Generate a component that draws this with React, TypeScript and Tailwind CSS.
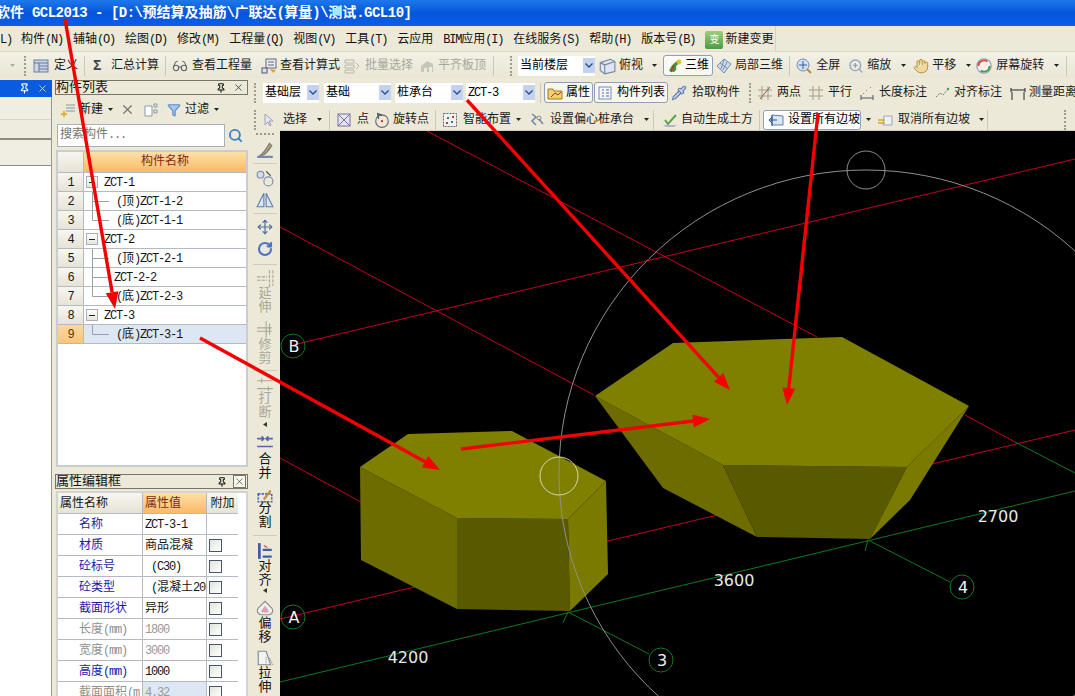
import type { ReactNode } from "react"
import { Pin, X, Search, Filter, Move, RotateCw, Pipette, Glasses, ZoomIn, Hand } from "lucide-react"

const T = ({ children, latin = "text-[12px] tracking-[-1.2px]" }: { children: string; latin?: string }) => (
  <>
    {children.split(/([\u4e00-\u9fff]+)/).map((part, i) =>
      /[\u4e00-\u9fff]/.test(part) ? <span key={i}>{part}</span> : <span key={i} className={latin}>{part}</span>
    )}
  </>
)

const Svg = ({ children, w = 16, h = 16 }: { children: ReactNode; w?: number; h?: number }) => (
  <svg width={w} height={h} viewBox="0 0 16 16" className="shrink-0" fill="none">{children}</svg>
)

const Caret = ({ className = "ml-[6px]" }: { className?: string }) => (
  <svg width="5" height="3" viewBox="0 0 5 3" className={`shrink-0 ${className}`}><path d="M0 0h5L2.5 3z" fill="#222" /></svg>
)
const Grip = ({ className = "" }: { className?: string }) => (
  <div className={`h-[20px] w-0 shrink-0 border-l-2 border-dotted border-[#9f9c8c] ${className}`} />
)
const Sep = ({ className = "" }: { className?: string }) => (
  <div className={`h-[20px] w-px shrink-0 bg-[#cbc8b6] ${className}`} />
)

const Tool = ({ icon, label, gap = "gap-[4px]", className = "", caret, caretClass, off }: {
  icon?: ReactNode; label: string; gap?: string; className?: string; caret?: boolean; caretClass?: string; off?: boolean
}) => (
  <div className={`flex shrink-0 items-center ${gap} ${off ? "text-[#a9a798]" : "text-[#1b1b1b]"} ${className}`}>
    {icon}
    <span className="whitespace-pre"><T>{label}</T></span>
    {caret && <Caret className={caretClass} />}
  </div>
)

const Drop = ({ label, className }: { label: string; className: string }) => (
  <div className={`flex h-[20px] shrink-0 items-center justify-between bg-white pl-[2px] ${className}`}>
    <span className="whitespace-pre"><T>{label}</T></span>
    <div className="flex h-[15px] w-[12px] items-center justify-center bg-[#c3d3ef]">
      <svg width="8" height="5" viewBox="0 0 8 5"><path d="M1 0l3 3 3-3 1 1-4 4-4-4z" fill="#2c4f8c" /></svg>
    </div>
  </div>
)

const icons = {
  define: <Svg><rect x="1" y="2" width="14" height="12" fill="#c9d6ea" stroke="#6f7f9c" /><path d="M1 5h14M6 5v9M6 8h9M6 11h9" stroke="#66779a" /></Svg>,
  glasses: <Glasses size={16} color="#666" strokeWidth={1.6} className="shrink-0" />,
  calc: <Svg><rect x="5" y="1" width="10" height="9" fill="#e8edf5" stroke="#667" /><path d="M7 4h6M7 7h6" stroke="#667" /><rect x="1" y="10" width="5" height="5" fill="#d8e2f2" stroke="#557" /><path d="M9 11l3 4 3-3" fill="#e0a030" /></Svg>,
  batch: <Svg><path d="M1 2h9v3H1zM1 7h9v3H1zM1 12h9v3H1z" stroke="#b9b7a9" /><path d="M12 5l3 3-3 3" stroke="#b9b7a9" /></Svg>,
  level: <Svg><path d="M2 14V8l6-5 6 3v8z" fill="#c7c6ba" /><path d="M5 14v-4h3v4zM10 14V9h3v5z" fill="#eceadd" /></Svg>,
  cube: <Svg w={18} h={18}><path d="M2 5l9-3 4 2v9l-9 2-4-3z" fill="#dfe6f2" stroke="#7486a3" /><path d="M2 5l4 2v8M6 7l9-3" stroke="#7486a3" /></Svg>,
  tri: <Svg><path d="M2 13c2-5 5-9 11-11-1 3-2 5-4 6 1 2 0 5-2 6z" fill="#3b9b3b" /><path d="M4 14l3-7" stroke="#b33" strokeWidth="1.5" /><circle cx="12" cy="4" r="2.4" fill="#e4c227" /></Svg>,
  part: <Svg><path d="M8 1l7 5-7 9-7-7z" fill="#cfdcee" stroke="#7b8ba8" /><path d="M4 5l8 6M8 2L5 11M11 4l-4 8" stroke="#7b8ba8" /></Svg>,
  full: <Svg><circle cx="7" cy="7" r="6" fill="#cfe0f5" stroke="#6d8cb8" /><path d="M7 3v8M3 7h8" stroke="#3b5d92" /><path d="M11 11l4 4" stroke="#b98c3a" strokeWidth="2" /></Svg>,
  zoom: <ZoomIn size={16} color="#8fa3c0" strokeWidth={2} className="shrink-0" />,
  pan: <Hand size={16} color="#b48c2f" fill="#efd9a0" strokeWidth={1.4} className="shrink-0" />,
  spin: <Svg w={18} h={18}><circle cx="8" cy="8" r="6.4" fill="#f5efe8" stroke="#8a9ab5" /><path d="M3 8a5 5 0 0 1 8-4" stroke="#d43" strokeWidth="1.6" /><path d="M13 8a5 5 0 0 1-8 4" stroke="#3a9a4b" strokeWidth="1.6" /></Svg>,
  prop: <Svg><path d="M1 4h5l1 2h8v8H1z" fill="#f1cf6a" stroke="#9c7c25" /><path d="M4 12l4-4 3 2 3-3" stroke="#a33" /></Svg>,
  list: <Svg><rect x="2" y="2" width="12" height="12" fill="#f3f6fb" stroke="#7e8ea9" /><path d="M5 5h2M5 8h2M5 11h2M9 5h3M9 8h3M9 11h3" stroke="#4d6894" /></Svg>,
  pick: <Pipette size={16} color="#5a78a8" fill="#c7d7ee" strokeWidth={1.6} className="shrink-0" />,
  two: <Svg><path d="M1 5h14M1 11h14M5 1v14M11 1v14" stroke="#a09d90" /><path d="M3 14L13 2" stroke="#8a5a3a" /></Svg>,
  para: <Svg><path d="M1 5h14M1 11h14M5 1v14M11 1v14" stroke="#a09d90" /></Svg>,
  len: <Svg><path d="M2 10v5M14 10v5M2 13h12" stroke="#556" /><path d="M4 9l1-1M7 6l1-1M11 3l1-1" stroke="#889" /></Svg>,
  align: <Svg><path d="M2 12l4-4 3 2 5-6" stroke="#778" strokeDasharray="2 1" /><circle cx="14" cy="4" r="1.2" fill="#495" /></Svg>,
  measure: <Svg><path d="M1 3v4M15 3v4M1 5h14M2 7v8M14 7v8" stroke="#222" /></Svg>,
  arrow: <Svg><path d="M5 2v11l3-3 2 4 1-1-2-4h4z" fill="#e6e8ef" stroke="#9aa3b5" /></Svg>,
  point: <Svg><rect x="2" y="2" width="12" height="12" fill="#e3e6f2" stroke="#7a6f9a" /><path d="M2 2l12 12M14 2L2 14" stroke="#7a6f9a" /></Svg>,
  rotP: <Svg w={18} h={18}><circle cx="8" cy="9" r="5.6" stroke="#667" /><path d="M4 2l1 5M4 2l4 2" stroke="#445" /><circle cx="8" cy="9" r="1" fill="#b33" /></Svg>,
  smart: <Svg><rect x="1.5" y="1.5" width="13" height="13" fill="#f2f2ee" stroke="#667" strokeDasharray="2 1" /><path d="M5 5h2v2H5zM9 9h2v2H9z" fill="#3f6fb0" /><path d="M10 4h2v2h-2zM4 10h2v2H4z" fill="#c33" /></Svg>,
  eccentric: <Svg><path d="M3 2l4 3-4 4 4 4M10 7l4 5" stroke="#6f86a8" strokeWidth="1.5" /><circle cx="10" cy="6" r="2" stroke="#888" /></Svg>,
  soil: <Svg w={18} h={16}><path d="M3 8l3 4 8-9" stroke="#5aa34a" strokeWidth="2" /><path d="M1 13h14l-3 2H4z" fill="#bcaed0" /></Svg>,
  slope: <Svg w={18} h={16}><path d="M4 3l11 1v9H4z" fill="#dce6f3" stroke="#5c7fb2" /><path d="M1 8h8M1 8l3-3M1 8l3 3M4 3v11" stroke="#25508f" /></Svg>,
  cancel: <Svg><path d="M7 4h8v9H6z" fill="#eef1f6" stroke="#9aa7bd" /><path d="M1 8h7M1 11h7" stroke="#d6a733" strokeWidth="1.4" /></Svg>,
  plus: <Svg><path d="M6 3h9M6 6h9M6 9h9" stroke="#8794ab" /><path d="M4 9v6M1 12h6" stroke="#e0b53a" strokeWidth="2" /></Svg>,
  copy: <Svg><path d="M2 4h7v10H2z" fill="#fff" stroke="#8c98ac" /><path d="M11 2h3v3h-3zM11 8h3v3h-3z" stroke="#8c98ac" /></Svg>,
}

const TitleBar = () => (
  <div className="flex h-[26px] shrink-0 items-center bg-gradient-to-b from-[#1f78ea] via-[#0555dc] to-[#0a5ee6] text-[14px] font-bold text-white">
    <span className="-ml-[4px] whitespace-pre"><T latin="text-[14px] tracking-[-0.5px]">软件 GCL2013 - [D:\预结算及抽筋\广联达(算量)\测试.GCL10]</T></span>
  </div>
)

const menus = ["构件(N)", "辅轴(O)", "绘图(D)", "修改(M)", "工程量(Q)", "视图(V)", "工具(T)", "云应用", "BIM应用(I)", "在线服务(S)", "帮助(H)", "版本号(B)"]

const MenuBar = () => (
  <div className="flex h-[26px] shrink-0 items-center border-b border-[#dcd9c8] bg-[#ece9d8] text-[12px] text-[#111]">
    <div className="flex h-full w-[776px] shrink-0 items-center gap-[10px] border-r border-[#d5d2c0] pl-[21px] pt-[3px]">
      <span className="absolute left-0 whitespace-pre"><T>L)</T></span>
      {menus.map((m) => <span key={m} className="shrink-0 whitespace-pre"><T>{m}</T></span>)}
      <div className="flex shrink-0 items-center gap-[2px] whitespace-pre">
        <div className="flex h-[18px] w-[18px] items-center justify-center rounded-[2px] bg-gradient-to-b from-[#9ccf7a] to-[#4f9a45] text-[10px] text-white">变</div>
        <span>新建变更</span>
      </div>
    </div>
  </div>
)

const TopToolbar = () => (
  <div className="flex h-[26px] shrink-0 items-center bg-gradient-to-b from-[#f3f1e6] to-[#e9e6d6] pt-[1px] text-[12px]">
    <div className="flex w-[20px] shrink-0 justify-end"><Caret className="mr-[5px] opacity-30" /></div>
    <Grip className="ml-[4px]" />
    <Tool className="ml-[7px]" gap="gap-[5px]" icon={icons.define} label="定义" />
    <Sep className="ml-[6px]" />
    <Tool className="ml-[8px]" gap="gap-[7px]" icon={<span className="w-[11px] text-[14px] font-bold leading-none text-[#444]">Σ</span>} label="汇总计算" />
    <Sep className="ml-[6px]" />
    <Tool className="ml-[6px]" icon={icons.glasses} label="查看工程量" />
    <Tool className="ml-[9px]" gap="gap-[3px]" icon={icons.calc} label="查看计算式" />
    <Tool className="ml-[4px]" gap="gap-[5px]" off icon={icons.batch} label="批量选择" />
    <Tool className="ml-[6px]" gap="gap-[3px]" off icon={icons.level} label="平齐板顶" />
    <Sep className="ml-[7px]" />
    <Grip className="ml-[16px]" />
    <Drop className="ml-[6px] w-[77px]" label="当前楼层" />
    <Tool className="ml-[3px]" gap="gap-[3px]" icon={icons.cube} label="俯视" caret caretClass="ml-[6px]" />
    <div className="ml-[6px] flex h-[21px] w-[50px] shrink-0 items-center gap-[2px] rounded-[3px] border border-[#8f9fb5] bg-white/70 pl-[3px]">
      {icons.tri}<span>三维</span>
    </div>
    <Tool className="ml-[3px]" gap="gap-[3px]" icon={icons.part} label="局部三维" />
    <Sep className="ml-[6px]" />
    <Tool className="ml-[6px]" gap="gap-[4px]" icon={icons.full} label="全屏" />
    <Tool className="ml-[8px]" gap="gap-[3px]" icon={icons.zoom} label="缩放" caret caretClass="ml-[7px]" />
    <Tool className="ml-[7px]" gap="gap-[3px]" icon={icons.pan} label="平移" caret caretClass="ml-[7px]" />
    <Tool className="ml-[4px]" gap="gap-[3px]" icon={icons.spin} label="屏幕旋转" caret caretClass="ml-[7px]" />
    <Sep className="ml-[7px]" />
    <div className="ml-[7px] shrink-0">{icons.zoom}</div>
  </div>
)

const LeftDock = () => (
  <div className="flex w-[52px] shrink-0 flex-col pt-[2px]">
    <div className="flex h-[17px] shrink-0 items-center justify-end gap-[7px] bg-[#0a5be0] pr-[4px] text-white">
      <Pin size={11} strokeWidth={2.5} />
      <X size={11} strokeWidth={1.5} />
    </div>
    <div className="flex flex-1 flex-col border-r border-[#9a988a]">
      <div className="h-[23px] border-b border-[#d8d5c4] bg-[#f0eee2]" />
      <div className="h-[20px] border-b-2 border-[#8d8b7e] bg-[#eeebdf]" />
      <div className="h-[26px] border-b border-[#8d8b7e] bg-[#f0eee2]" />
      <div className="flex-1 bg-white" />
    </div>
  </div>
)

const tree: [string, number, string?][] = [
  ["ZCT-1", 0],
  ["(顶)ZCT-1-2", 1, "mid"],
  ["(底)ZCT-1-1", 1, "last"],
  ["ZCT-2", 0],
  ["(顶)ZCT-2-1", 1, "mid"],
  ["ZCT-2-2", 1, "midshort"],
  ["(底)ZCT-2-3", 1, "last"],
  ["ZCT-3", 0],
  ["(底)ZCT-3-1", 1, "last"],
]

const TreeRow = ({ name, level, kind, n }: { name: string; level: number; kind?: string; n: number }) => {
  const active = n === 9
  return (
    <div className="flex h-[19px] border-b border-[#b4bac2]">
      <div className={`flex w-[26px] shrink-0 items-center justify-center border-r border-[#b4bac2] pt-[1px] text-[12px] tracking-[-1px] ${active ? "bg-gradient-to-b from-[#fdd79c] to-[#f9c67a] text-[#5a3a10]" : "bg-gradient-to-b from-[#f7f6f0] to-[#e6e3d6]"}`}>{n}</div>
      <div className={`flex flex-1 items-center whitespace-pre ${active ? "bg-[#dde7f4]" : "bg-white"}`}>
        {level === 0 ? (
          <>
            <div className="ml-[2px] flex h-[12px] w-[12px] items-center justify-center border border-[#a9adb5] bg-gradient-to-b from-white to-[#e6e6e0]">
              <div className="h-px w-[6px] bg-[#222]" />
            </div>
            <span className="ml-[6px] pt-[1px]"><T>{name}</T></span>
          </>
        ) : (
          <>
            <svg width="28" height="19" className="shrink-0">
              <path d={`M8.5 0V${kind === "last" ? 9.5 : 19}M8.5 9.5H25`} stroke="#9aa0a8" />
            </svg>
            <span className={`pt-[1px] ${kind === "midshort" ? "ml-[2px]" : "ml-[4px]"}`}><T>{name}</T></span>
          </>
        )}
      </div>
    </div>
  )
}

const props: [string, string, boolean, boolean?][] = [
  ["名称", "ZCT-3-1", false],
  ["材质", "商品混凝", true],
  ["砼标号", " (C30)", true],
  ["砼类型", " (混凝土20", true],
  ["截面形状", "异形", true],
  ["长度(mm)", "1800", true, true],
  ["宽度(mm)", "3000", true, true],
  ["高度(mm)", "1000", true],
  ["截面面积(m", "4.32", true, true],
]

const ComponentPanel = () => (
  <div className="flex w-[198px] shrink-0 flex-col pl-[3px] pr-[2px] pt-[2px] text-[12px] text-[#151515]">
    <div className="flex h-[15px] shrink-0 items-center justify-between border border-[#77756a] bg-[#ece9d8] pr-[3px] text-[13px] leading-none">
      <span className="-mt-px">构件列表</span>
      <div className="flex items-center gap-[7px]"><Pin size={10} strokeWidth={2.5} /><X size={11} strokeWidth={1.5} /></div>
    </div>
    <div className="flex h-[28px] shrink-0 items-center pl-[5px] pt-[1px]">
      {icons.plus}
      <span className="ml-[3px] text-[12px]">新建</span>
      <Caret className="ml-[5px]" />
      <X size={15} color="#777" className="ml-[7px]" />
      <div className="ml-[8px]">{icons.copy}</div>
      <Filter size={14} color="#5d8fce" fill="#a8c6ea" className="ml-[8px]" />
      <span className="ml-[4px]">过滤</span>
      <Caret className="ml-[5px]" />
    </div>
    <div className="flex h-[24px] shrink-0 items-center pl-[2px]">
      <div className="flex h-[23px] w-[168px] items-center border border-[#aab0ba] bg-white pl-[2px] text-[#77756a]"><T>搜索构件...</T></div>
      <div className="flex h-[23px] w-[21px] items-center justify-center"><Search size={15} color="#3d7fd0" strokeWidth={3} /></div>
    </div>
    <div className="mt-[3px] ml-[1px] flex h-[317px] shrink-0 flex-col border-2 border-[#c9cdd0] bg-white">
      <div className="flex h-[21px] shrink-0 border-b border-[#b4bac2]">
        <div className="w-[26px] shrink-0 border-r border-[#b4bac2] bg-gradient-to-b from-[#f7f6f0] to-[#e6e3d6]" />
        <div className="flex flex-1 items-center justify-center bg-gradient-to-b from-[#fde0a8] to-[#f8ba65] text-[#7d2a12]">构件名称</div>
      </div>
      {tree.map(([name, level, kind], i) => <TreeRow key={i} n={i + 1} name={name} level={level} kind={kind} />)}
    </div>
    <div className="mt-[7px] flex h-[15px] shrink-0 items-center justify-between border border-[#77756a] bg-[#ece9d8] pr-[1px] text-[13px] leading-none">
      <span>属性编辑框</span>
      <div className="flex items-center gap-[6px]"><Pin size={10} strokeWidth={2.5} /><div className="border border-[#77756a] bg-white/60"><X size={11} strokeWidth={1.2} /></div></div>
    </div>
    <div className="mt-[2px] ml-[1px] flex flex-1 flex-col overflow-hidden border-2 border-b-0 border-[#d2d4d0] bg-white">
      <div className="flex h-[21px] w-[180px] shrink-0 border-b border-[#b4bac2]">
        <div className="flex w-[85px] items-center border-r border-[#b4bac2] bg-gradient-to-b from-[#f7f6f0] to-[#e6e3d6] pl-[2px] pt-[1px]">属性名称</div>
        <div className="flex w-[64px] items-center border-r border-[#b4bac2] bg-gradient-to-b from-[#fde0a8] to-[#f8ba65] pl-[2px] pt-[1px] text-[#7d2a12]">属性值</div>
        <div className="flex flex-1 items-center justify-center bg-gradient-to-b from-[#f7f6f0] to-[#e6e3d6] pt-[1px]">附加</div>
      </div>
      {props.map(([name, value, box, grey], i) => (
        <div key={i} className="flex h-[21px] w-[180px] shrink-0 border-b border-[#b4bac2] whitespace-pre">
          <div className={`flex w-[85px] shrink-0 items-center border-r border-[#b4bac2] pl-[21px] pt-[1px] ${grey ? "text-[#8f8f8f]" : "text-[#1a1aa8]"}`}><T>{name}</T></div>
          <div className={`flex w-[64px] shrink-0 items-center overflow-hidden border-r border-[#b4bac2] pl-[2px] pt-[1px] ${grey ? "text-[#9a9a9a]" : ""} ${i === 8 ? "bg-[#dde7f4]" : ""}`}><T>{value}</T></div>
          <div className="flex flex-1 items-center pl-[2px]">
            {box && <div className="h-[13px] w-[13px] border border-[#47566b] bg-gradient-to-br from-[#e4e4dc] to-white" />}
          </div>
        </div>
      ))}
    </div>
  </div>
)

const Row2 = () => (
  <div className="flex h-[26px] shrink-0 items-center pt-[3px] text-[12px]">
    <Grip className="ml-[4px]" />
    <Drop className="ml-[7px] w-[56px]" label="基础层" />
    <Drop className="ml-[5px] w-[67px]" label="基础" />
    <Drop className="ml-[4px] w-[68px]" label="桩承台" />
    <Drop className="ml-[3px] w-[69px]" label="ZCT-3" />
    <Sep className="ml-[5px]" />
    <div className="ml-[3px] flex h-[21px] w-[49px] shrink-0 items-center gap-[3px] rounded-[3px] border border-[#8f9fb5] bg-white/60 pl-[2px]">{icons.prop}<span>属性</span></div>
    <div className="ml-[1px] flex h-[21px] w-[74px] shrink-0 items-center gap-[4px] rounded-[3px] border border-[#8f9fb5] bg-white/60 pl-[2px]">{icons.list}<span>构件列表</span></div>
    <Tool className="ml-[3px]" gap="gap-[5px]" icon={icons.pick} label="拾取构件" />
    <Grip className="ml-[9px]" />
    <Tool className="ml-[6px]" gap="gap-[4px]" icon={icons.two} label="两点" />
    <Tool className="ml-[7px]" gap="gap-[4px]" icon={icons.para} label="平行" />
    <Tool className="ml-[7px]" gap="gap-[4px]" icon={icons.len} label="长度标注" />
    <Tool className="ml-[7px]" gap="gap-[4px]" icon={icons.align} label="对齐标注" />
    <Tool className="ml-[8px]" gap="gap-[3px]" icon={icons.measure} label="测量距离" />
  </div>
)

const Row3 = () => (
  <div className="flex h-[26px] shrink-0 items-center pt-[5px] text-[12px]">
    <Grip className="ml-[4px]" />
    <Tool className="ml-[4px]" gap="gap-[7px]" icon={icons.arrow} label="选择" caret caretClass="ml-[3px]" />
    <Sep className="ml-[7px]" />
    <Tool className="ml-[6px]" gap="gap-[5px]" icon={icons.point} label="点" />
    <Tool className="ml-[4px]" gap="gap-[2px]" icon={icons.rotP} label="旋转点" />
    <Sep className="ml-[6px]" />
    <Tool className="ml-[6px]" gap="gap-[5px]" icon={icons.smart} label="智能布置" caret caretClass="ml-0" />
    <Tool className="ml-[8px]" gap="gap-[5px]" icon={icons.eccentric} label="设置偏心桩承台" caret caretClass="ml-[5px]" />
    <Sep className="ml-[4px]" />
    <Tool className="ml-[7px]" gap="gap-[2px]" icon={icons.soil} label="自动生成土方" />
    <Sep className="ml-[6px]" />
    <div className="ml-[3px] flex h-[20px] w-[98px] shrink-0 items-center gap-[3px] rounded-[3px] border border-[#8f9fb5] bg-white pl-[3px]">{icons.slope}<span>设置所有边坡</span></div>
    <Caret className="ml-[5px]" />
    <Tool className="ml-[6px]" gap="gap-[5px]" icon={icons.cancel} label="取消所有边坡" caret caretClass="ml-[4px]" />
    <Sep className="ml-[3px]" />
    <Grip className="ml-[76px]" />
  </div>
)

const VText = ({ a, b, off, className = "" }: { a: string; b: string; off?: boolean; className?: string }) => (
  <div className={`flex flex-col items-center text-[13px] leading-[14px] ${off ? "text-[#a9a798]" : "text-[#111]"} ${className}`}>
    <span>{a}</span>
    <span>{b}</span>
  </div>
)
const VSep = ({ className }: { className: string }) => <div className={`h-px w-[24px] shrink-0 bg-[#cfccba] ${className}`} />
const VCaret = ({ className }: { className: string }) => (
  <svg width="4" height="5" viewBox="0 0 4 5" className={className}><path d="M4 0v5L0 2.5z" fill="#333" /></svg>
)
const VIcon = ({ className, children }: { className: string; children: ReactNode }) => (
  <div className={`flex h-[18px] shrink-0 items-center justify-center ${className}`}>{children}</div>
)

const EditBar = () => (
  <div className="flex w-[30px] shrink-0 flex-col items-center overflow-hidden bg-[#ece9d8]">
    <div className="mt-[3px] h-0 w-[18px] shrink-0 border-t-2 border-dotted border-[#9f9c8c]" />
    <VIcon className="mt-[5px]"><Svg w={18} h={18}><path d="M3 14c3-1 5-4 9-11l2 2c-3 5-6 8-9 9z" fill="#b7a26a" stroke="#7a7a80" /><path d="M1 15h14" stroke="#7d88a5" strokeWidth="2" /></Svg></VIcon>
    <VSep className="mt-[5px]" />
    <VIcon className="mt-[5px]"><Svg w={18} h={18}><circle cx="4" cy="5" r="3" fill="#cfdcf0" stroke="#7d8cab" /><circle cx="11" cy="11" r="4" stroke="#7d8cab" /><path d="M9 2l4 4" stroke="#555" /></Svg></VIcon>
    <VIcon className="mt-[4px]"><Svg w={18} h={18}><path d="M7 2L1 14h6zM9 2l6 12H9z" fill="#dbe5f4" stroke="#5e80b5" /></Svg></VIcon>
    <VSep className="mt-[4px]" />
    <VIcon className="mt-[4px]"><Move size={16} color="#4d6c9d" strokeWidth={1.8} /></VIcon>
    <VIcon className="mt-[4px]"><RotateCw size={16} color="#4d73c4" strokeWidth={3.2} /></VIcon>
    <VSep className="mt-[6px]" />
    <VIcon className="mt-[4px]"><Svg w={18} h={18}><path d="M12 1v14M15 1v14M1 7h9M1 10h9" stroke="#a9a798" strokeDasharray="3 1" /></Svg></VIcon>
    <VText a="延" b="伸" off />
    <VIcon className="mt-[5px]"><Svg w={18} h={18}><path d="M9 1v14M12 3v10M1 7h13M1 10h13" stroke="#a9a798" /></Svg></VIcon>
    <VText a="修" b="剪" off />
    <VSep className="mt-[4px]" />
    <VIcon className="mt-[3px]"><Svg w={18} h={18}><path d="M1 6h14M1 13h14M5 4v4M11 11v4" stroke="#a9a798" /></Svg></VIcon>
    <VText a="打" b="断" off />
    <VCaret className="mt-[2px] shrink-0" />
    <VIcon className="mt-[6px]"><Svg w={18} h={18}><path d="M1 5h5M1 12h14M10 5h5M5 3l2 2-2 2M11 3L9 5l2 2" stroke="#5563b5" strokeWidth="1.4" /></Svg></VIcon>
    <VText a="合" b="并" className="mt-[2px]" />
    <VIcon className="mt-[5px]"><Svg w={18} h={18}><path d="M2 7h12v7H2z" stroke="#4f62c2" strokeDasharray="2 1" strokeWidth="1.4" /><path d="M7 12l6-8" stroke="#c78f4c" strokeWidth="2" /></Svg></VIcon>
    <VText a="分" b="割" className="-mt-[2px]" />
    <VSep className="mt-[5px]" />
    <VIcon className="mt-[6px]"><Svg w={18} h={18}><path d="M3 1v14" stroke="#3d5ea5" strokeWidth="2.4" /><path d="M6 7h8M6 13h8" stroke="#3d5ea5" strokeWidth="2" /><path d="M7 3l3 2" stroke="#b33" /></Svg></VIcon>
    <VText a="对" b="齐" />
    <VCaret className="shrink-0" />
    <VIcon className="mt-[6px]"><Svg w={18} h={18}><path d="M8 2l6 6c2 3 0 6-3 6H5c-3 0-5-3-3-6z" fill="#f2f0e8" stroke="#8c8c95" /><path d="M8 6l3 4c1 2-1 2-3 2s-4 0-3-2z" fill="#dda0b8" /></Svg></VIcon>
    <VText a="偏" b="移" />
    <VIcon className="mt-[4px]"><Svg w={18} h={18}><path d="M2 2h7l4 12H2z" fill="#f4f4ee" stroke="#7f8a9d" /><path d="M9 7v7M12 8l3 6" stroke="#7f8a9d" strokeDasharray="1 1" /></Svg></VIcon>
    <VText a="拉" b="伸" />
  </div>
)

const Node = ({ x, y, label }: { x: number; y: number; label: string }) => (
  <g>
    <circle cx={x} cy={y} r="12" stroke="#0d7a1c" fill="none" />
    <text x={x + 1} y={y + 6} textAnchor="middle" fontSize="16" fill="#f0f0f0" fontFamily="'DejaVu Sans',sans-serif">{label}</text>
  </g>
)

const Scene = () => (
  <svg viewBox="280 131 795 565" width="795" height="565" className="block bg-black">
    <g stroke="#c4001a" strokeWidth="1" fill="none">
      <path d="M293 345L1075 159" />
      <path d="M280 619L1075 430" />
      <path d="M427 131L817 337M965 415L1015 442" />
      <path d="M280 227L594 395" />
      <path d="M280 458L361 502" />
    </g>
    <g stroke="#0d7a1c" strokeWidth="1" fill="none">
      <path d="M280 682L1075 491" />
      <path d="M1015 442L1075 473" />
      <path d="M563 623L568 612L649 654" />
      <path d="M865 551L868 540L950 582" />
    </g>
    {/* small block */}
    <polygon points="360,467 457,518 457,609 361,560" fill="#6c6c00" />
    <polygon points="457,518 568,519 570,611 457,609" fill="#595900" />
    <polygon points="568,519 606,481 608,574 570,611" fill="#7a7a00" />
    <polygon points="360,467 408,434 512,431 606,481 568,519 457,518" fill="#808000" />
    {/* big block */}
    <polygon points="595,396 723,465 757,537 663,488" fill="#6c6c00" />
    <polygon points="723,465 907,467 870,539 757,537" fill="#595900" />
    <polygon points="907,467 969,406 910,500 870,539" fill="#7a7a00" />
    <polygon points="595,396 673,343 842,337 969,406 907,467 723,465" fill="#808000" />
    <g fill="none" strokeWidth="1">
      <ellipse cx="866" cy="473" rx="307" ry="303" stroke="#8f8f8f" />
      <circle cx="866" cy="170" r="19" stroke="#8f8f8f" />
      <circle cx="559" cy="476" r="19" stroke="#d8d8b0" />
    </g>
    <Node x={293} y={346} label="B" />
    <Node x={293} y={617} label="A" />
    <Node x={661} y={660} label="3" />
    <Node x={962} y={587} label="4" />
    <g fontSize="16" fill="#e8e8e8" fontFamily="'DejaVu Sans',sans-serif" textAnchor="middle">
      <text x="408" y="663">4200</text>
      <text x="734" y="586">3600</text>
      <text x="998" y="522">2700</text>
    </g>
  </svg>
)

const arrows = [
  [65, 19, 115, 309],
  [467, 100, 730, 390],
  [818, 113, 787, 405],
  [200, 338, 440, 470],
  [461, 449, 710, 419],
]

const Arrow = ({ a }: { a: number[] }) => {
  const [x1, y1, x2, y2] = a
  const len = Math.hypot(x2 - x1, y2 - y1)
  const ux = (x2 - x1) / len
  const uy = (y2 - y1) / len
  const bx = x2 - ux * 17
  const by = y2 - uy * 17
  return (
    <g>
      <line x1={x1} y1={y1} x2={bx} y2={by} stroke="#f40000" strokeWidth="3.4" />
      <polygon points={`${x2},${y2} ${bx - uy * 6.5},${by + ux * 6.5} ${bx + uy * 6.5},${by - ux * 6.5}`} fill="#f40000" />
    </g>
  )
}

export default function App() {
  return (
    <div className="relative flex h-[696px] w-[1075px] flex-col overflow-hidden bg-[#ece9d8] font-['Liberation_Mono','Noto_Sans_CJK_SC',monospace] text-[12px]">
      <TitleBar />
      <MenuBar />
      <TopToolbar />
      <div className="flex min-h-0 flex-1">
        <LeftDock />
        <ComponentPanel />
        <div className="flex min-w-0 flex-1 flex-col">
          <Row2 />
          <Row3 />
          <div className="flex min-h-0 flex-1">
            <EditBar />
            <div className="min-w-0 flex-1 border-t border-[#cfcfcf]"><Scene /></div>
          </div>
        </div>
      </div>
      {/* red annotation arrows drawn over the whole window */}
      <svg className="pointer-events-none absolute inset-0" width="1075" height="696">
        {arrows.map((a, i) => <Arrow key={i} a={a} />)}
      </svg>
    </div>
  )
}
